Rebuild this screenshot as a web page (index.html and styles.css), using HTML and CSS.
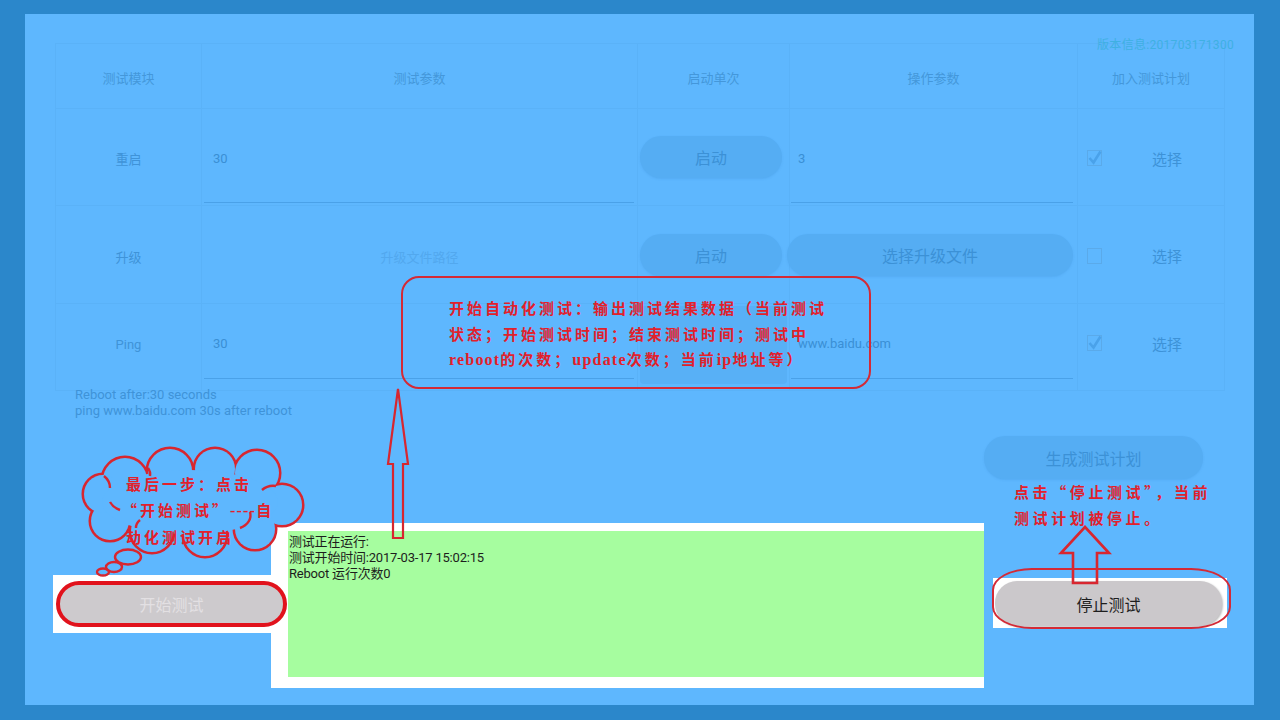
FILE: index.html
```html
<!DOCTYPE html>
<html lang="zh-CN">
<head>
<meta charset="utf-8">
<title>自动化测试</title>
<link rel="stylesheet" href="styles.css">
</head>
<body>
<div class="screen">
  <div class="panel">
    <div class="version">版本信息:201703171300</div>

    <div class="table">
      <div class="cell head">测试模块</div>
      <div class="cell head">测试参数</div>
      <div class="cell head">启动单次</div>
      <div class="cell head">操作参数</div>
      <div class="cell head">加入测试计划</div>

      <div class="cell name">重启</div>
      <div class="cell"><div class="field f-param r1">30</div></div>
      <div class="cell"><div class="btn btn-start">启动</div></div>
      <div class="cell"><div class="field f-op r1">3</div></div>
      <div class="cell plan">
        <span class="check"><svg width="15" height="16" viewBox="0 0 15 16"><path d="M2.5 8 L6.5 12.5 L13.5 1.5" fill="none" stroke="#4aa2ea" stroke-width="2.6"/></svg></span>
        <span class="choose">选择</span>
      </div>

      <div class="cell name">升级</div>
      <div class="cell"><div class="placeholder">升级文件路径</div></div>
      <div class="cell"><div class="btn btn-start">启动</div></div>
      <div class="cell"><div class="btn btn-file">选择升级文件</div></div>
      <div class="cell plan">
        <span class="check"></span>
        <span class="choose">选择</span>
      </div>

      <div class="cell name last">Ping</div>
      <div class="cell"><div class="field f-param r3">30</div></div>
      <div class="cell"><div class="btn-shade"></div></div>
      <div class="cell"><div class="field f-op r3">www.baidu.com</div></div>
      <div class="cell plan last">
        <span class="check"><svg width="15" height="16" viewBox="0 0 15 16"><path d="M2.5 8 L6.5 12.5 L13.5 1.5" fill="none" stroke="#4aa2ea" stroke-width="2.6"/></svg></span>
        <span class="choose">选择</span>
      </div>
    </div>

    <div class="notes">
      <div>Reboot after:30 seconds</div>
      <div>ping www.baidu.com 30s after reboot</div>
    </div>

    <div class="plan-row">
      <div class="btn btn-plan">生成测试计划</div>
    </div>

    <div class="bottom">
      <div class="start-wrap">
        <div class="start-btn">开始测试</div>
      </div>
      <div class="log">
        <div class="log-inner">
          <div>测试正在运行:</div>
          <div>测试开始时间:2017-03-17 15:02:15</div>
          <div>Reboot 运行次数0</div>
        </div>
      </div>
      <div class="stop-wrap">
        <div class="stop-btn">停止测试</div>
      </div>
    </div>

    <!-- annotations -->
    <div class="callout">开始自动化测试：输出测试结果数据（当前测试<br>状态；开始测试时间；结束测试时间；测试中<br><span class="lat">reboot</span>的次数；<span class="lat">update</span>次数；当前<span class="lat">ip</span>地址等）</div>

    <svg class="arrow-up1" width="28" height="156" viewBox="0 0 28 156">
      <path d="M13 2 L23 77 L18 77 L18 151 L8 151 L8 77 L3 77 Z" fill="none" stroke="#d8262f" stroke-width="2.2"/>
    </svg>

    <svg class="cloud" width="240" height="150" viewBox="75 440 240 150">
      <g fill="#d8262f" stroke="#d8262f" stroke-width="5">
        <circle cx="125" cy="480" r="22"/>
        <circle cx="170" cy="471" r="22"/>
        <circle cx="215" cy="469" r="20"/>
        <circle cx="257" cy="473" r="22"/>
        <circle cx="282" cy="505" r="20"/>
        <circle cx="255" cy="529" r="20"/>
        <circle cx="205" cy="535" r="21"/>
        <circle cx="152" cy="531" r="21"/>
        <circle cx="110" cy="521" r="19"/>
        <circle cx="103" cy="494" r="19"/>
      </g>
      <g fill="#5eb7fe">
        <circle cx="125" cy="480" r="22"/>
        <circle cx="170" cy="471" r="22"/>
        <circle cx="215" cy="469" r="20"/>
        <circle cx="257" cy="473" r="22"/>
        <circle cx="282" cy="505" r="20"/>
        <circle cx="255" cy="529" r="20"/>
        <circle cx="205" cy="535" r="21"/>
        <circle cx="152" cy="531" r="21"/>
        <circle cx="110" cy="521" r="19"/>
        <circle cx="103" cy="494" r="19"/>
        <ellipse cx="190" cy="502" rx="88" ry="32"/>
      </g>
      <g fill="none" stroke="#d8262f" stroke-width="2.4">
        <path d="M104 476 A18 16 0 0 1 110 488"/>
        <path d="M148 468 A20 14 0 0 1 150 476"/>
        <path d="M262 490 A16 14 0 0 1 276 486"/>
        <path d="M110 502 A20 16 0 0 0 120 510"/>
        <path d="M136 528 A18 12 0 0 1 140 520"/>
        <path d="M240 528 A18 14 0 0 0 250 512"/>
        <ellipse cx="128" cy="557" rx="13" ry="7.5"/>
        <ellipse cx="114" cy="567" rx="8" ry="5"/>
        <ellipse cx="103" cy="572" rx="6" ry="3.5"/>
      </g>
    </svg>
    <div class="cloud-text">最后一步：点击<br><span class="q">“开始测试”<span class="lat">----</span>自</span><br>动化测试开启</div>

    <div class="stop-note">点击“停止测试”，当前<br>测试计划被停止。</div>
    <svg class="arrow-up2" width="54" height="62" viewBox="0 0 54 62">
      <path d="M27 2 L51 28 L39 28 L39 58 L15 58 L15 28 L3 28 Z" fill="none" stroke="#d8262f" stroke-width="2.6"/>
    </svg>
    <div class="stop-ring"></div>
  </div>
</div>
</body>
</html>
```

FILE: styles.css
```css
* { box-sizing: border-box; }
html, body { margin: 0; padding: 0; }
body {
  width: 1280px;
  height: 720px;
  overflow: hidden;
  background: #2b87cb;
  font-family: Roboto, "Noto Sans CJK SC", sans-serif;
}
.screen {
  width: 1280px;
  height: 720px;
  padding: 14px 26px 15px 25px;
}
.panel {
  position: relative;
  width: 1229px;
  height: 691px;
  background: #5eb7fe;
  padding: 29px 0 0 30px;
  display: flex;
  flex-direction: column;
  align-items: flex-start;
}
.version {
  position: absolute;
  top: 21px;
  right: 20px;
  font-size: 12px;
  color: #3fb0e2;
  letter-spacing: 0.3px;
}

/* table */
.table {
  display: grid;
  grid-template-columns: 146px 436px 152px 288px 147px;
  grid-template-rows: 65px 97px 98px 87px;
  width: 1169px;
  border-top: 1px solid #5ab2f8;
  border-left: 1px solid #5ab2f8;
}
.cell {
  border-right: 1px solid #5ab2f8;
  border-bottom: 1px solid #5ab2f8;
  display: flex;
  align-items: center;
  color: #3f93d8;
  font-size: 13px;
  min-width: 0;
}
.head, .name { justify-content: center; }
.head { font-size: 13px; color: #4497da; padding-top: 3px; }
.name { font-size: 13px; padding-top: 3px; }
.name.last { padding-top: 0; padding-bottom: 5px; }

.field {
  align-self: stretch;
  display: flex;
  align-items: center;
  border-bottom: 1px solid #4aa1e8;
  color: #3a8fd5;
  font-size: 13px;
}
.f-param { margin: 0 3px 2px 2px; padding-left: 9px; width: 430px; }
.f-op { margin: 0 3px 2px 1px; padding-left: 7px; width: 282px; }
.r1 { padding-top: 6px; }
.r3 { padding-top: 4px; margin-bottom: 11px; }
.placeholder {
  width: 100%;
  text-align: center;
  color: #52a8ee;
  font-size: 13px;
  padding-top: 3px;
}

.btn {
  display: flex;
  align-items: center;
  justify-content: center;
  background: #55adf3;
  color: #3c91d6;
  font-size: 16px;
  border-radius: 21px;
  box-shadow: 0 1px 2px rgba(60, 140, 210, 0.25);
}
.btn-start { width: 142px; height: 42px; margin-left: 2px; }
.btn-file { width: 286px; height: 42px; margin-left: -3px; }
.btn-shade {
  width: 147px;
  height: 78px;
  margin: 2px 0 6px 2px;
  background: #58b0f6;
  border-radius: 4px;
}
.plan { padding-left: 9px; }
.plan.last { padding-bottom: 10px; }
.check {
  width: 15px;
  height: 16px;
  border: 1px solid #5aaaea;
  display: inline-flex;
  margin-top: 2px;
}
.check svg { display: block; margin: -1px; }
.choose {
  margin-left: 50px;
  font-size: 15px;
  color: #3d92d7;
  padding-top: 2px;
}

.notes {
  margin: -4px 0 0 20px;
  font-size: 13px;
  line-height: 16px;
  color: #3f93d8;
}

.plan-row {
  align-self: stretch;
  display: flex;
  justify-content: flex-end;
  padding-right: 51px;
  margin-top: 17px;
}
.btn-plan { width: 219px; height: 43px; font-size: 16px; }

/* bottom */
.bottom {
  display: flex;
  align-items: flex-start;
  margin: 44px 0 0 -2px;
}
.start-wrap {
  width: 219px;
  height: 58px;
  margin-top: 52px;
  background: #fff;
  padding: 6px 0 0 3px;
}
.start-btn {
  position: relative;
  z-index: 2;
  width: 231px;
  height: 46px;
  border: 4px solid #e1121c;
  border-radius: 23px;
  background: #cdcacd;
  color: #e3e0e3;
  font-size: 16px;
  display: flex;
  align-items: center;
  justify-content: center;
}
.log {
  width: 713px;
  height: 165px;
  margin-left: -1px;
  background: #fff;
  padding: 8px 0 11px 17px;
}
.log-inner {
  height: 100%;
  background: #a6fd9f;
  padding: 3px 0 0 1px;
  font-size: 13px;
  line-height: 16px;
  color: #1d1d1d;
  letter-spacing: -0.2px;
}
.stop-wrap {
  width: 234px;
  height: 50px;
  margin: 55px 0 0 9px;
  background: #fff;
  padding: 3px 0 0 2px;
}
.stop-btn {
  width: 227px;
  height: 45px;
  border-radius: 22px;
  background: #cbc8cb;
  box-shadow: 1px 1px 2px rgba(0,0,0,0.25);
  color: #1e1e1e;
  font-size: 16px;
  display: flex;
  align-items: center;
  justify-content: center;
}

/* annotations */
.callout {
  position: absolute;
  left: 376px;
  top: 262px;
  width: 470px;
  height: 113px;
  border: 2px solid #d42a36;
  border-radius: 18px;
  padding: 17px 0 0 46px;
  color: #e2202b;
  font-family: "Noto Sans CJK SC", sans-serif;
  font-weight: 700;
  font-size: 15px;
  line-height: 25.5px;
  letter-spacing: 3px;
  white-space: nowrap;
}
.lat {
  font-family: "Liberation Serif", serif;
  font-size: 16px;
  letter-spacing: 1.2px;
}
.arrow-up1 {
  position: absolute;
  left: 360px;
  top: 373px;
}
.cloud {
  position: absolute;
  left: 50px;
  top: 426px;
}
.cloud-text {
  position: absolute;
  left: 101px;
  top: 457px;
  color: #e2202b;
  font-family: "Noto Sans CJK SC", sans-serif;
  font-weight: 700;
  font-size: 15px;
  line-height: 26px;
  letter-spacing: 3px;
  white-space: nowrap;
}
.cloud-text .q { margin-left: -4px; }
.stop-note {
  position: absolute;
  left: 989px;
  top: 465px;
  color: #e2202b;
  font-family: "Noto Sans CJK SC", sans-serif;
  font-weight: 700;
  font-size: 15px;
  line-height: 26px;
  letter-spacing: 3.6px;
  white-space: nowrap;
}
.arrow-up2 {
  position: absolute;
  left: 1033px;
  top: 511px;
}
.stop-ring {
  position: absolute;
  left: 967px;
  top: 554px;
  width: 239px;
  height: 61px;
  border: 2px solid #d42a36;
  border-radius: 40px / 22px;
}
```
